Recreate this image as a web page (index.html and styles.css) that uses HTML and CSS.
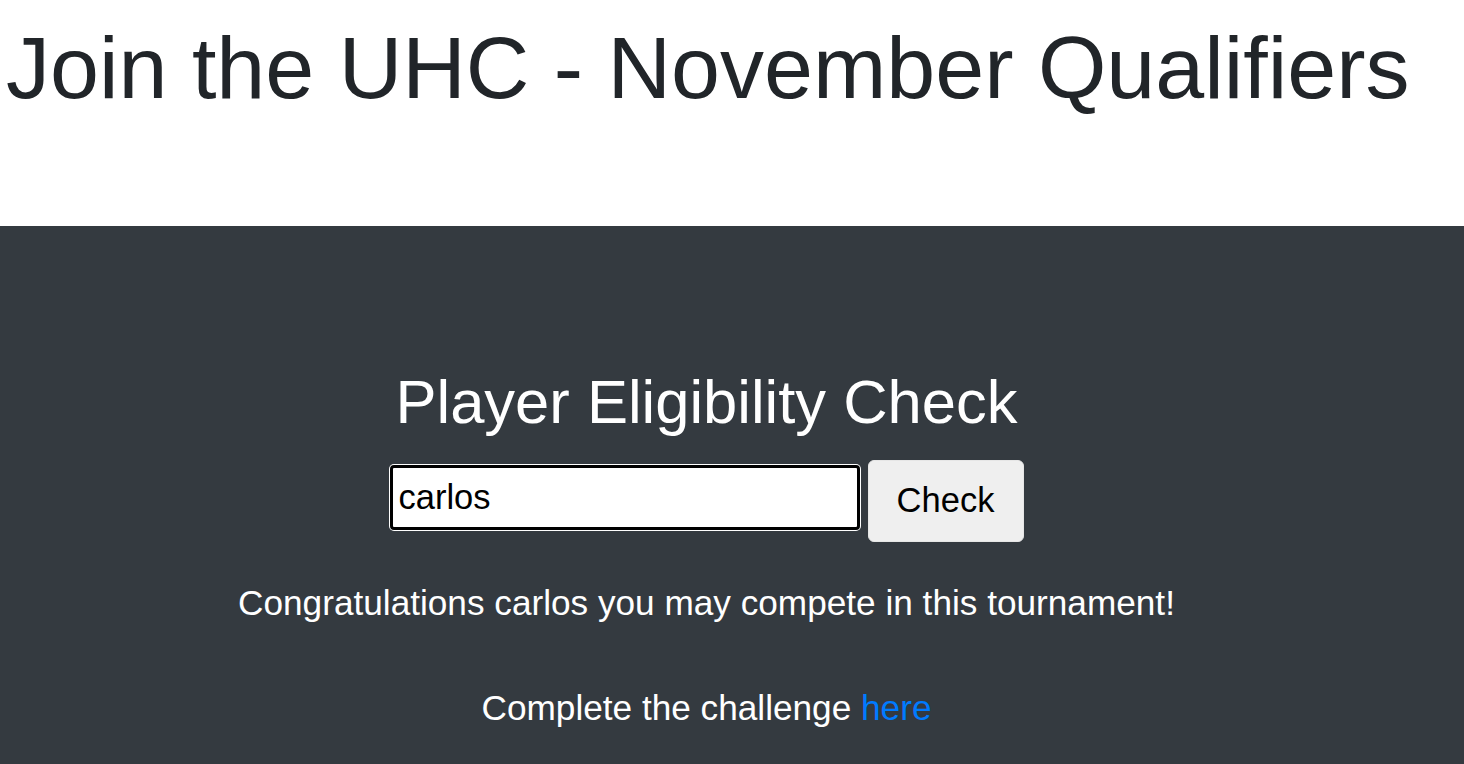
FILE: index.html
```html
<!DOCTYPE html>
<html lang="en">
<head>
<meta charset="utf-8">
<title>Join the UHC - November Qualifiers</title>
<link rel="stylesheet" href="styles.css">
</head>
<body>
<header class="top">
  <h1 class="title">Join the UHC - November Qualifiers</h1>
</header>
<section class="dark">
  <div class="inner">
    <h2 class="heading">Player Eligibility Check</h2>
    <form class="check-form" onsubmit="return false">
      <input class="name-input" type="text" value="carlos">
      <button class="check-btn" type="submit">Check</button>
    </form>
    <p class="msg msg-congrats">Congratulations carlos you may compete in this tournament!</p>
    <p class="msg msg-challenge">Complete the challenge <a class="link" href="#">here</a></p>
  </div>
</section>
</body>
</html>
```

FILE: styles.css
```css
* { box-sizing: border-box; }

html, body {
  margin: 0;
  padding: 0;
}

body {
  font-family: "Liberation Sans", Arial, sans-serif;
  color: #212529;
  background: #343a40;
}

.top {
  background: #ffffff;
  height: 226px;
  padding: 15px 0 0 6px;
}

.title {
  margin: 0;
  font-size: 88px;
  font-weight: 400;
  line-height: 1.2;
  color: #212529;
}

.dark {
  background: #343a40;
  min-height: 538px;
  padding-top: 139px;
}

.inner {
  width: 1413px;
  display: flex;
  flex-direction: column;
  align-items: center;
  text-align: center;
  color: #ffffff;
}

.heading {
  margin: 0 0 21px;
  font-size: 61.5px;
  font-weight: 400;
  line-height: 1.2;
}

.check-form {
  display: flex;
  align-items: flex-start;
  gap: 8px;
  margin: 0;
}

.name-input {
  margin-top: 5px;
  width: 470px;
  height: 65px;
  border: 3px solid #000;
  border-radius: 4px;
  box-shadow: 0 0 0 1px #ffffff;
  padding: 0 6px;
  font-family: "Liberation Sans", Arial, sans-serif;
  font-size: 34.5px;
  color: #000;
  background: #fff;
  outline: none;
}

.check-btn {
  width: 156px;
  height: 82px;
  border: 1px solid #e6e6e6;
  border-radius: 6px;
  background: #efefef;
  font-family: "Liberation Sans", Arial, sans-serif;
  font-size: 34.5px;
  color: #000;
  padding: 0;
}

.msg {
  font-size: 35.2px;
  line-height: 1.5;
  margin: 0;
}

.msg-congrats {
  margin-top: 35px;
}

.msg-challenge {
  margin-top: 52px;
}

.link {
  color: #007bff;
  text-decoration: none;
}
```
